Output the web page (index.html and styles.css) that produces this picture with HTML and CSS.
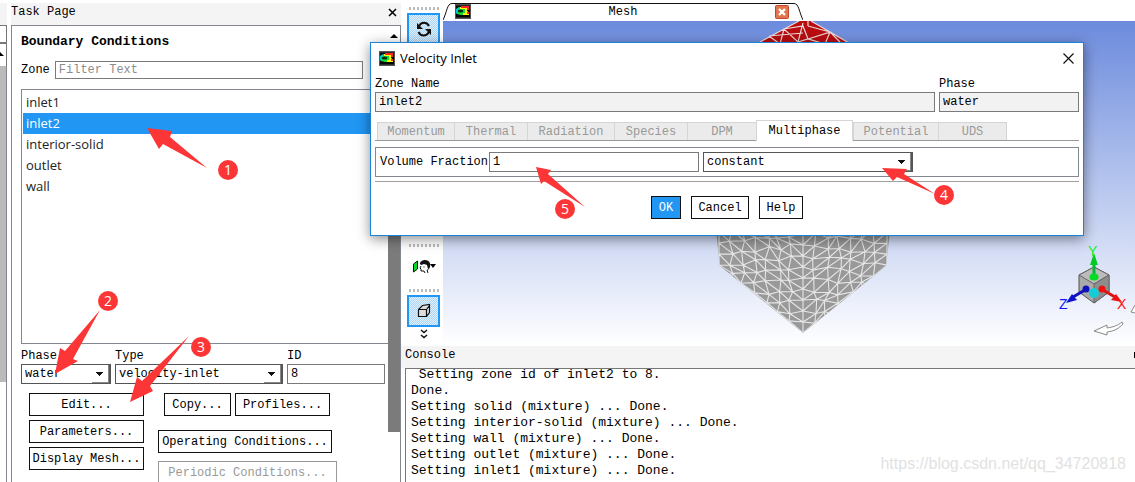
FILE: index.html
```
<!DOCTYPE html>
<html lang="en">
<head>
<meta charset="utf-8">
<title>Boundary Conditions</title>
<link rel="stylesheet" href="styles.css">
</head>
<body>
<svg class="defs" aria-hidden="true">
  <symbol id="app" viewBox="0 0 16 15">
    <path fill="#555" d="M0 0h16v15H0z"/><path fill="#050505" d="M1 1.500h14v12H1z"/>
    <path fill="#1d3" d="M1 6l4-3h5l4 7v1H6L2 10z"/><path fill="#0cc" d="M1 5l3-2 1 1-3 3v3L1 9z"/>
    <path fill="#ff0" d="M5 3h7v4l2 2v2H8V9h2V5H5z"/>
    <path fill="#f22" d="M6 2h8v4h-2V4H6zM12 8h2v2h-2z"/>
    <ellipse cx="5.500" cy="7" rx="2.800" ry="1.500" fill="#031"/>
  </symbol>
</svg>
<div class="app">
  <aside class="sliver">
    <div class="strip"></div>
    <div class="stub"></div>
    <div class="stub arrow-stub"><svg width="5" height="22"><path d="M0 8l4 4H0z"/></svg></div>
    <div class="track"><div class="grip"></div></div>
  </aside>

  <section class="task">
    <header class="bar"><span>Task Page</span>
      <button class="x" aria-label="Close task page"><svg width="9" height="9"><path d="M1 1l7 7M8 1L1 8" stroke="#000" stroke-width="1.500"/></svg></button>
    </header>
    <div class="panel">
      <div class="form">
        <h1>Boundary Conditions</h1>
        <div class="zone"><label for="filter">Zone</label><input id="filter" class="field" placeholder="Filter Text"></div>
        <ul class="list">
          <li>inlet1</li><li class="sel">inlet2</li><li>interior-solid</li><li>outlet</li><li>wall</li>
        </ul>
        <div class="picks">
          <div class="pick"><label for="phase">Phase</label><span class="drop"><select id="phase"><option>water</option></select></span></div>
          <div class="pick"><label for="type">Type</label><span class="drop"><select id="type"><option>velocity-inlet</option></select></span></div>
          <div class="pick"><label for="zid">ID</label><input id="zid" class="field" value="8"></div>
        </div>
        <div class="actions">
          <div class="col">
            <button class="btn">Edit...</button><button class="btn">Parameters...</button><button class="btn">Display Mesh...</button>
          </div>
          <div class="col wide">
            <div class="pair"><button class="btn">Copy...</button><button class="btn">Profiles...</button></div>
            <button class="btn oper">Operating Conditions...</button>
            <button class="btn peri" disabled>Periodic Conditions...</button>
          </div>
        </div>
      </div>
      <div class="scroll">
        <svg width="12" height="19"><path d="M2 12l4-4 4 4z"/></svg>
        <div class="thumb"></div>
      </div>
    </div>
  </section>

  <main class="work">
    <div class="upper">
      <nav class="tools">
        <div class="group">
          <i class="dots"></i>
          <button class="tool on" aria-label="Refresh"><svg width="18" height="18" fill="none" stroke="#111" stroke-width="2"><path d="M4 6C6 1.500 12 1.500 14 6M3.500 12c2 4.500 8 4.500 10.500 0"/><path d="M2 3v6h6zM16 15V9h-6z" fill="#111" stroke="none"/></svg></button>
        </div>
        <div class="group">
          <i class="dots"></i>
          <button class="tool view" aria-label="Views"><svg width="26" height="16"><path d="M2.500 5l4-3v8l-4 3z" fill="#0d2" stroke="#111"/><path d="M10 7L9 9l1 1v2h3l1 2M18 8c0 2-1 3-2 3l1 3" fill="none" stroke="#111"/><path d="M9 5c0-3 3-4 5-4 4 0 6 3 5 7l-2 2-1-4-3-1-3 1z" fill="#111"/><path d="M12.500 8h1" stroke="#111"/><path d="M19 5h6l-3 4z"/></svg></button>
          <i class="dots"></i>
          <button class="tool on" aria-label="Projection"><svg width="16" height="16" stroke="#111" fill="#ddd" stroke-width="1.200"><path d="M2.500 6.500h8v7h-8zM2.500 6.500l4-4 7-1v1l-3 4M10.500 13.500l3-4v-8"/></svg></button>
          <button class="more" aria-label="More"><svg width="8" height="10" fill="none" stroke="#111" stroke-width="1.500"><path d="M1 1l3 2.500L7 1M1 6l3 2.500L7 6"/></svg></button>
        </div>
      </nav>
      <div class="graphics">
        <div class="tabrow">
          <div class="tab">
            <svg class="edge" width="10" height="18"><path d="M0 17C4 9 4 .500 9 .500h1" fill="none" stroke="#111"/></svg>
            <div class="face"><svg width="16" height="15"><use href="#app"/></svg><span>Mesh</span>
              <button class="shut" aria-label="Close Mesh"><svg width="14" height="14"><rect x=".5" y=".5" width="13" height="13" rx="1" fill="#df7650" stroke="#c8442c"/><path d="M4 4l6 6M10 4l-6 6" stroke="#fff" stroke-width="2.400"/></svg></button></div>
            <svg class="edge" width="10" height="18"><path d="M0 .500h1C6 .500 6 9 10 17" fill="none" stroke="#111"/></svg>
          </div>
        </div>
        <div class="scene">
          <svg class="mesh" width="460" height="325" aria-label="Mesh view">
            <path d="M314 23l42-23h12l40 23z" fill="#b90d10"/>
            <path d="M317 21l39-21M368 0l38 22M326 15l11 8 4-15 14 13 5-19M341 8l19-3 5 13 22-7-22-6M326 15l34-3M387 11l-5 12-17-5-10 3M387 11l10 10M365 0l0 5" fill="none" stroke="#ead8d8" stroke-width="1.200"/>
            <clipPath id="cube"><path d="M273 210l4 35 83 67 83-67 4-35z"/></clipPath>
            <g clip-path="url(#cube)"><path d="M273 210h174v102H273z" fill="#999"/><path id="wires" fill="none" stroke="#e6e6e6" stroke-width="1.100"/></g>
          </svg>
          <svg class="triad" width="80" height="100" font-family="Liberation Sans" font-size="14">
            <path d="M24 32l15-8 15 8v17L39 60 24 49z" fill="#aaa" stroke="#555"/><path d="M24 32l15 9 15-9-15-8z" fill="#bbb" stroke="#666"/><path d="M39 41v19l15-11V32z" fill="#8d8d8d" stroke="#666"/>
            <path d="M39 35V20" stroke="#0b3" stroke-width="3"/><path d="M35 22l4-12 4 12z" fill="#0c2"/><ellipse cx="39" cy="34" rx="4.500" ry="3.500" fill="#0d2"/>
            <path d="M30 47L18 54" stroke="#11b" stroke-width="3"/><path d="M11 60l6-9 5 6z" fill="#11c"/><circle cx="31" cy="46" r="3.500" fill="#11b"/>
            <path d="M48 47l12 7" stroke="#d11" stroke-width="3"/><path d="M67 59l-6-8-5 6z" fill="#e11"/><circle cx="47" cy="46" r="3.500" fill="#e11"/>
            <circle cx="39" cy="50" r="5" fill="#13cdd6"/>
            <text x="33" y="13" fill="#1e2">Y</text><text x="4" y="66" fill="#11f">Z</text><text x="62" y="66" fill="#f11">X</text>
            <path d="M67 79c-5 4-9 5-15 6v-3l-13 6 13 4v-3c8-1 12-4 16-8zM80 62l-4 7 4 1" fill="#fff" stroke="#888"/>
          </svg>
        </div>
      </div>
    </div>
    <section class="console">
      <header class="bar"><span>Console</span><i class="mark"></i></header>
      <pre class="log"> Setting zone id of inlet2 to 8.
Done.
Setting solid (mixture) ... Done.
Setting interior-solid (mixture) ... Done.
Setting wall (mixture) ... Done.
Setting outlet (mixture) ... Done.
Setting inlet1 (mixture) ... Done.</pre>
      <span class="credit">https://blog.csdn.net/qq_34720818</span>
    </section>
  </main>
</div>

<div class="dialog" role="dialog" aria-labelledby="dt">
  <header class="title"><svg width="16" height="15"><use href="#app"/></svg><span id="dt">Velocity Inlet</span>
    <button class="x" aria-label="Close"><svg width="11" height="11"><path d="M.5.500l10 10M10.500.500l-10 10" stroke="#111" stroke-width="1.200"/></svg></button></header>
  <div class="names">
    <div class="name"><label for="zn">Zone Name</label><input id="zn" class="field dim" value="inlet2" readonly></div>
    <div class="name"><label for="ph">Phase</label><input id="ph" class="field dim" value="water" readonly></div>
  </div>
  <div class="tabs" role="tablist">
    <button role="tab" disabled>Momentum</button><button role="tab" disabled>Thermal</button><button role="tab" disabled>Radiation</button><button role="tab" disabled>Species</button><button role="tab" disabled>DPM</button><button role="tab" class="active" aria-selected="true">Multiphase</button><button role="tab" disabled>Potential</button><button role="tab" disabled>UDS</button>
  </div>
  <div class="fraction"><label for="vf">Volume Fraction</label><input id="vf" class="field" value="1">
    <span class="drop"><select aria-label="Volume Fraction method"><option>constant</option></select></span></div>
  <div class="answers"><button class="btn ok">OK</button><button class="btn">Cancel</button><button class="btn">Help</button></div>
</div>

<svg class="notes" width="1000" height="420" aria-hidden="true">
  <g fill="#fc3636">
    <path d="M147 128l25 3-2 6 37 31-44-24-4 5zM55 374l5-26 5 3 35-41-27 49 5 2zM130 402l7-25 5 4 47-45-39 50 3 5zM882 168l25 1-3 5 31 20-38-17-4 4zM536 167l15 3-3 4 37 33-41-26-3 3z"/>
    <circle cx="228" cy="170" r="10"/><circle cx="108" cy="301" r="10"/><circle cx="201" cy="347" r="10"/><circle cx="944" cy="195" r="10"/><circle cx="565" cy="209" r="10"/>
  </g>
  <g class="nums"><text x="228" y="175">1</text><text x="108" y="306">2</text><text x="201" y="352">3</text><text x="944" y="200">4</text><text x="565" y="214">5</text></g>
</svg>
<script src="mesh.js"></script>
</body>
</html>
```
FILE: styles.css
```
* { box-sizing: border-box; }
body { margin: 0; background: #fff; color: #000; font: 12px/16px "Liberation Mono", monospace; overflow: hidden; }
button, input, select { font: inherit; color: inherit; margin: 0; padding: 0; border-radius: 0; }
button { background: none; border: 0; }
svg { display: block; }
.defs { display: none; }
.app { display: grid; grid-template-columns: 11px 390px 1fr; height: 100vh; overflow: hidden; }
.bar { display: flex; align-items: center; justify-content: space-between; height: 22px; background: #f4f4f4; padding-bottom: 4px; }
.x { display: grid; place-items: center; }

.sliver { display: flex; flex-direction: column; width: 7px; padding-top: 3px; }
.strip { height: 22px; background: #f4f4f4; }
.stub { height: 18px; border: solid #777; border-width: 1px 1px 1px 0; }
.arrow-stub { height: 23px; border-bottom: 0; }
.track { flex: 1; border-right: 1px solid #828790; }
.grip { height: 316px; background: #bababa; }

.task { display: flex; flex-direction: column; padding-top: 3px; min-height: 0; }
.task .x { width: 18px; }
.panel { flex: 1; display: flex; min-height: 0; overflow: hidden; border: 1px solid #828790; border-bottom: 0; }
.form { flex: 1; padding: 8px 0 0 9px; }
h1 { margin: 0 0 11px; font-size: 13px; line-height: 16px; }
.zone { display: flex; align-items: center; gap: 5px; padding-right: 25px; }
.field { min-width: 0; height: 20px; border: 1px solid #7a7a7a; background: #fff; padding: 0 3px; outline: 0; }
.zone .field { flex: 1; height: 18px; }
.field::placeholder { color: #8c8c8c; opacity: 1; }
.list { list-style: none; margin: 10px 0 4px; padding: 2px 0 0 1px; height: 255px; border: 1px solid #828790; border-right: 0; font: 13px/21px "Open Sans", sans-serif; color: #222; }
.list li { padding-left: 3px; }
.list .sel { background: #2196f3; color: #fff; }
.picks { display: grid; grid-template-columns: 90px 168px 98px; gap: 4px; }
.pick { display: flex; flex-direction: column; }
.drop { position: relative; display: flex; height: 20px; border: 1px solid #555; border-right-width: 2px; }
.drop select { flex: 1; min-width: 0; appearance: none; border: 0; background: #fff; padding: 0 3px; outline: 0; }
.drop::after { content: ""; position: absolute; right: 0; bottom: 0; width: 16px; height: 17px; border: solid #888; border-width: 0 1px 1px 0; background: linear-gradient(#111, #111) 4px 7px / 7px 1px no-repeat, linear-gradient(#111, #111) 5px 8px / 5px 1px no-repeat, linear-gradient(#111, #111) 6px 9px / 3px 1px no-repeat, linear-gradient(#111, #111) 7px 10px / 1px 1px no-repeat; pointer-events: none; }
.actions { display: flex; gap: 14px; padding: 9px 0 0 8px; }
.col { display: flex; flex-direction: column; gap: 4px; width: 115px; }
.btn { height: 23px; border: 1px solid #111; background: #fff; white-space: nowrap; }
.wide { width: auto; gap: 0; align-items: flex-start; }
.pair { display: grid; grid-template-columns: 67px 95px; gap: 4px; padding-left: 6px; }
.oper { width: 174px; margin-top: 14px; }
.peri { width: 179px; margin-top: 8px; border-color: #999; color: #999; }
.scroll { width: 12px; display: flex; flex-direction: column; }
.thumb { height: 387px; background: #7b7b7b; }

.work { display: grid; grid-template-rows: minmax(0, 1fr) 136px; min-width: 0; min-height: 0; }
.upper { display: flex; min-height: 0; }
.tools { width: 42px; display: flex; flex-direction: column; justify-content: space-between; padding: 7px 3px 6px 6px; }
.group { display: flex; flex-direction: column; }
.dots { height: 3px; margin: 0 1px 3px 2px; background: repeating-linear-gradient(90deg, #bbb 0 2px, transparent 2px 4px); }
.tool { height: 32px; display: grid; place-items: center; }
.view { height: 39px; padding-bottom: 6px; }
.on { border: 2px solid #2196f3; background: repeating-conic-gradient(#a9d4f6 0 25%, #e2f1fc 0 50%) 0 0 / 2px 2px; }
.more { display: grid; place-items: center; height: 13px; }
.graphics { flex: 1; display: flex; flex-direction: column; min-width: 0; }
.tabrow { padding-top: 3px; }
.tab { display: flex; width: 360px; height: 18px; }
.face { flex: 1; display: flex; align-items: center; justify-content: space-between; border-top: 1px solid #111; padding: 0 4px 2px 2px; }
.scene { position: relative; flex: 1; overflow: hidden; background: linear-gradient(#6c8bdd, #fff); }
.triad { position: absolute; right: 0; bottom: 3px; }
.console { position: relative; display: flex; flex-direction: column; padding-left: 4px; min-height: 0; background: linear-gradient(#f4f4f4, #f4f4f4) 0 0 / 4px 22px no-repeat; }
.mark { width: 1px; height: 6px; background: #000; }
.log { flex: 1; display: flex; align-items: flex-end; margin: 0; padding: 0 5px 3px; border: solid #777; border-width: 1px 0 0 1px; font: 13px/16px "Liberation Mono", monospace; overflow: hidden; }
.credit { position: absolute; right: 9px; bottom: 8px; font: 16px/20px "Liberation Sans", sans-serif; color: #e2e2e2; }

.dialog { position: absolute; left: 370px; top: 42px; width: 714px; padding: 0 4px 16px; border: 1px solid #1883d7; background: #fff; box-shadow: 0 3px 12px rgba(0, 0, 0, .45); }
.title { display: flex; align-items: center; gap: 5px; height: 30px; padding: 0 4px; font: 13px/18px "Open Sans", sans-serif; }
.title .x { margin-left: auto; width: 14px; height: 18px; }
.names { display: grid; grid-template-columns: 1fr 140px; gap: 4px; padding-top: 3px; }
.name { display: flex; flex-direction: column; }
.dim { background: #f2f2f2; }
.tabs { display: grid; grid-template-columns: 77px 73px 87px 73px 69px 97px 85px 69px; align-items: end; margin-top: 8px; padding-left: 2px; border-bottom: 1px solid #999; }
.tabs button { height: 18px; border: solid #d5d5d5; border-width: 1px 0 0 1px; background: #ebebeb; color: #999; }
.tabs button:last-child { border-right-width: 1px; }
.tabs .active { height: 21px; margin-bottom: -1px; border-right-width: 1px; background: #fff; color: #000; }
.fraction { display: grid; grid-template-columns: auto 210px 210px 1fr; align-items: center; gap: 4px; margin-top: 6px; height: 30px; padding: 0 0 0 4px; border: 1px solid #828790; }
.fraction label { width: 105px; white-space: nowrap; }
.answers { display: grid; grid-template-columns: 30px 58px 44px; gap: 10px; justify-content: center; margin-top: 4px; padding-top: 14px; border-top: 1px solid #a0a0a0; }
.ok { background: #2196f3; color: #fff; }

.notes { position: absolute; left: 0; top: 0; pointer-events: none; }
.nums { fill: #fff; font: 14px "Open Sans", sans-serif; text-anchor: middle; }
```
FILE: mesh.js
```
// Triangulated wireframe of the two visible lower faces of the cube.
let seed = 11;
const rnd = () => (seed = (seed * 16807) % 2147483647) / 2147483647 - 0.5;
const COLS = 7;
const ROWS = 16;
let d = "";
for (const side of [-1, 1]) {
  const cols = [];
  for (let i = 0; i <= COLS; i++) {
    const col = [];
    for (let j = -1; j <= ROWS; j++) {
      const jitter = i === 0 || i === COLS ? 0 : 5;
      const x = 360 + side * (i * 12 + rnd() * jitter);
      const y = 312 - i * 9.7 - j * 11 + rnd() * jitter;
      col.push(x.toFixed(1) + " " + y.toFixed(1));
    }
    cols.push(col);
  }
  for (let i = 0; i <= COLS; i++) {
    d += "M" + cols[i].join("L");
    if (i < COLS) {
      for (let j = 1; j <= ROWS; j++) {
        d += "M" + cols[i][j] + "L" + cols[i + 1][j] + "M" + cols[i][j] + "L" + cols[i + 1][j - 1];
      }
    }
  }
}
document.getElementById("wires").setAttribute("d", d);
```
